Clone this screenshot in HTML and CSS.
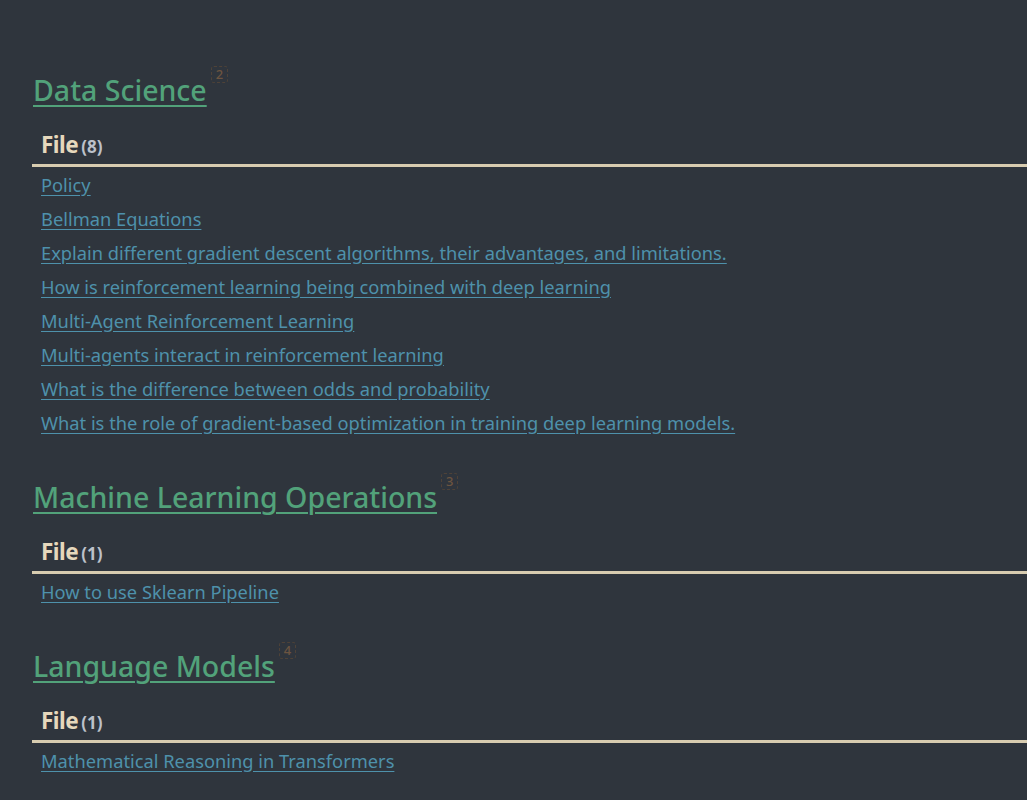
FILE: index.html
```html
<!DOCTYPE html>
<html lang="en">
<head>
<meta charset="utf-8">
<title>Index</title>
<link rel="stylesheet" href="styles.css">
</head>
<body>
<main class="page">
  <section class="cat">
    <h2 class="cat-title"><a href="#">Data Science</a><sup class="badge">2</sup></h2>
    <div class="group">
      <div class="group-head"><span class="group-name">File</span><span class="group-count">(8)</span></div>
      <ul class="links">
        <li><a href="#">Policy</a></li>
        <li><a href="#">Bellman Equations</a></li>
        <li><a href="#">Explain different gradient descent algorithms, their advantages, and limitations.</a></li>
        <li><a href="#">How is reinforcement learning being combined with deep learning</a></li>
        <li><a href="#">Multi-Agent Reinforcement Learning</a></li>
        <li><a href="#">Multi-agents interact in reinforcement learning</a></li>
        <li><a href="#">What is the difference between odds and probability</a></li>
        <li><a href="#">What is the role of gradient-based optimization in training deep learning models.</a></li>
      </ul>
    </div>
  </section>
  <section class="cat">
    <h2 class="cat-title"><a href="#">Machine Learning Operations</a><sup class="badge">3</sup></h2>
    <div class="group">
      <div class="group-head"><span class="group-name">File</span><span class="group-count">(1)</span></div>
      <ul class="links">
        <li><a href="#">How to use Sklearn Pipeline</a></li>
      </ul>
    </div>
  </section>
  <section class="cat">
    <h2 class="cat-title"><a href="#">Language Models</a><sup class="badge">4</sup></h2>
    <div class="group">
      <div class="group-head"><span class="group-name">File</span><span class="group-count">(1)</span></div>
      <ul class="links">
        <li><a href="#">Mathematical Reasoning in Transformers</a></li>
      </ul>
    </div>
  </section>
</main>
</body>
</html>
```
FILE: styles.css
```css
html, body {
  margin: 0;
  padding: 0;
  background: #2f353d;
  overflow: hidden;
}
body {
  font-family: "Noto Sans", "Open Sans", sans-serif;
  color: #c8c8c8;
}
.page {
  padding: 70px 0 0 32px;
}
.cat {
  margin: 0 0 37px 0;
}
.cat-title {
  margin: 0;
  font-size: 28.5px;
  line-height: 40px;
  font-weight: 500;
  padding-left: 1px;
  display: flex;
  align-items: flex-start;
}
.cat-title a {
  color: #52a27a;
  text-decoration: underline;
  text-decoration-thickness: 2px;
  text-underline-offset: 4px;
}
.badge {
  font-size: 13px;
  line-height: 15px;
  color: #6c5440;
  border: 1px dashed #4e4238;
  border-radius: 3px;
  padding: 0 4px;
  margin: -4px 0 0 4px;
}
.group {
  margin-top: 20px;
}
.group-head {
  padding: 0 0 2px 9px;
  line-height: 30px;
  border-bottom: 3px solid #d8ccb0;
  display: flex;
  align-items: baseline;
  gap: 3px;
}
.group-name {
  font-size: 22.5px;
  font-weight: 700;
  color: #e6d8bc;
  letter-spacing: -0.5px;
}
.group-count {
  font-size: 17px;
  font-weight: 700;
  color: #bcc1ca;
}
.links {
  list-style: none;
  margin: 1px 0 0 0;
  padding: 0 0 0 9px;
}
.links li {
  font-size: 18.3px;
  line-height: 34px;
}
.links a {
  color: #4e91ab;
  text-decoration: underline;
  text-underline-offset: 3px;
}
```
